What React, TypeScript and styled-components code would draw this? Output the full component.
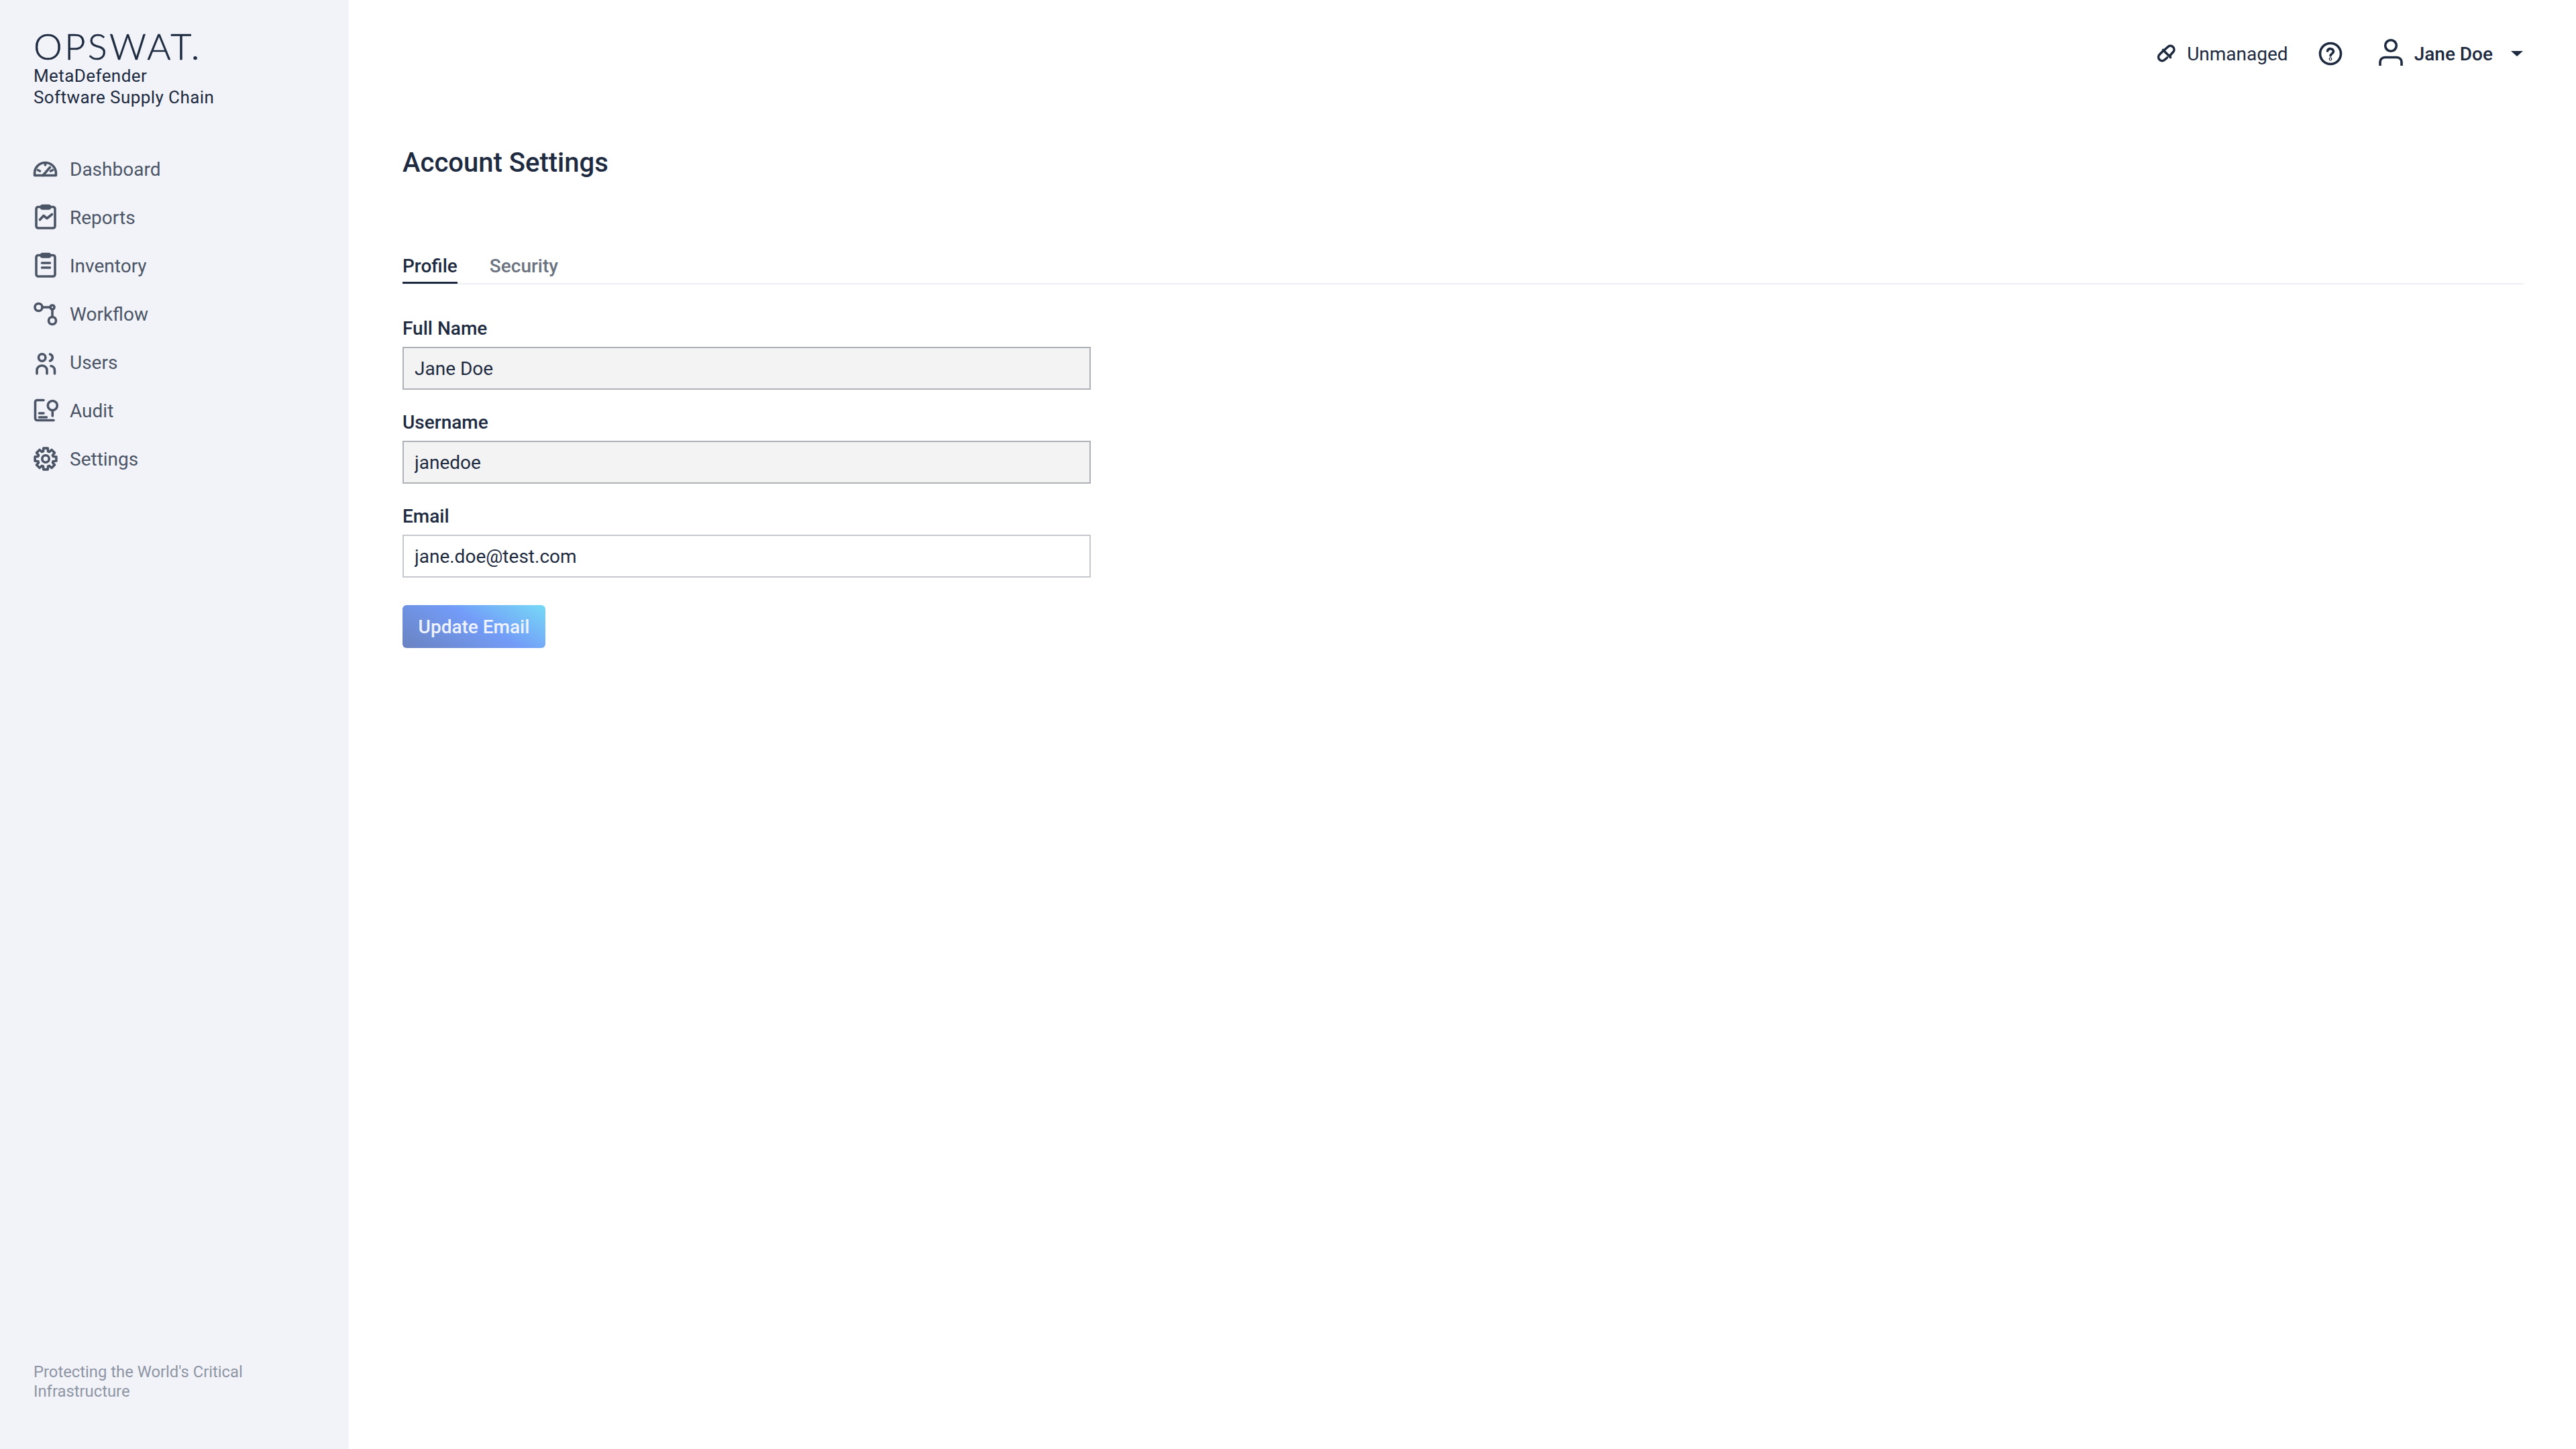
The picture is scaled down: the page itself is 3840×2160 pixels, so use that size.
import React from "react";
import styled, { createGlobalStyle } from "styled-components";

const GlobalStyle = createGlobalStyle`
  html, body {
    margin: 0;
    padding: 0;
    background: #fff;
  }
  body {
    font-family: Roboto, "Liberation Sans", sans-serif;
    color: #1d2a3f;
  }
`;

const Page = styled.div`
  display: flex;
  width: 3840px;
  height: 2160px;
  overflow: hidden;
`;

const Sidebar = styled.aside`
  display: flex;
  flex-direction: column;
  flex: 0 0 520px;
  box-sizing: border-box;
  padding: 38px 0 0 50px;
  background: #f1f3f9;
`;

const Logo = styled.div`
  font-family: Lato, sans-serif;
  font-weight: 300;
  font-size: 54px;
  line-height: 62px;
  letter-spacing: 3.4px;
  -webkit-text-stroke: 0.6px #1d2a3f;
  color: #1d2a3f;
`;

const Product = styled.div`
  margin-top: -3px;
  font-size: 26px;
  line-height: 32px;
  letter-spacing: 0.42px;
  color: #1d2a3f;
`;

const Nav = styled.nav`
  display: flex;
  flex-direction: column;
  margin: 55px 0 0 -2px;
`;

const NavItem = styled.div`
  display: flex;
  align-items: center;
  gap: 16px;
  height: 72px;
  font-size: 28px;
  color: #4b5565;
`;

const NavIcon = styled.svg`
  flex: none;
  width: 40px;
  height: 40px;
  fill: none;
  stroke: #4b5565;
  stroke-width: 3.6;
  stroke-linecap: round;
  stroke-linejoin: round;
`;

const Tagline = styled.div`
  margin-top: auto;
  margin-bottom: 71px;
  width: 340px;
  font-size: 23.8px;
  line-height: 29px;
  color: #8e95a3;
`;

const Main = styled.main`
  flex: 1;
  box-sizing: border-box;
  padding: 0 78px 0 80px;
`;

const TopBar = styled.header`
  display: flex;
  justify-content: flex-end;
  align-items: center;
  height: 160px;
  font-size: 28px;
`;

const Status = styled.div`
  display: flex;
  align-items: center;
  gap: 15px;
  margin-right: 45px;
`;

const HelpButton = styled.div`
  display: flex;
  margin-right: 54px;
`;

const UserMenu = styled.div`
  display: flex;
  align-items: center;
  gap: 17px;
  font-weight: 500;
`;

const BarIcon = styled.svg`
  flex: none;
  overflow: visible;
  fill: none;
  stroke: #1d2a3f;
  stroke-width: 3.6;
  stroke-linecap: round;
  stroke-linejoin: round;
`;

const Caret = styled.span`
  margin: 0 1px 0 10px;
  width: 0;
  height: 0;
  border-left: 9px solid transparent;
  border-right: 9px solid transparent;
  border-top: 8px solid #1d2a3f;
`;

const Title = styled.h1`
  margin: 60px 0 0;
  font-size: 40px;
  line-height: 46px;
  font-weight: 500;
`;

const Tabs = styled.div`
  display: flex;
  gap: 48px;
  margin-top: 111px;
  border-bottom: 2px solid #eeeff2;
`;

const Tab = styled.div<{ $active?: boolean }>`
  height: 46px;
  margin-bottom: -1px;
  box-sizing: border-box;
  padding-top: 3px;
  font-size: 28px;
  line-height: 34px;
  font-weight: 500;
  color: ${(p) => (p.$active ? "#1d2a3f" : "#6b7280")};
  border-bottom: ${(p) => (p.$active ? "3px solid #1d2a3f" : "none")};
`;

const Form = styled.form`
  display: flex;
  flex-direction: column;
  width: 1026px;
  padding-top: 49px;
`;

const Field = styled.div`
  display: flex;
  flex-direction: column;
  margin-bottom: 32px;
`;

const Label = styled.label`
  height: 44px;
  font-size: 28px;
  line-height: 34px;
  font-weight: 500;
`;

const TextInput = styled.input`
  height: 64px;
  box-sizing: border-box;
  padding: 0 16px;
  font-family: inherit;
  font-size: 28px;
  color: #1d2a3f;
  background: #fff;
  border: 2px solid #c6c8cf;
  border-radius: 0;
  outline: none;

  &:read-only {
    background: #f3f3f3;
    border-color: #aeb1b8;
  }
`;

const SubmitButton = styled.button`
  align-self: flex-start;
  width: 213px;
  height: 64px;
  margin-top: 9px;
  padding: 0;
  font-family: inherit;
  font-size: 28px;
  font-weight: 500;
  color: #eef3ff;
  background: linear-gradient(30deg, #6a82c0 0%, #739cf8 55%, #76daf6 100%);
  border: 0;
  border-radius: 6px;
`;

// eight rounded teeth round a ring
const gearPath = () => {
  const cx = 20;
  const cy = 20;
  const pts: string[] = [];
  for (let i = 0; i < 8; i++) {
    const a = (i * Math.PI) / 4 - Math.PI / 2;
    const at = (r: number, d: number) =>
      `${(cx + r * Math.cos(a + d)).toFixed(2)} ${(cy + r * Math.sin(a + d)).toFixed(2)}`;
    pts.push(
      `${i === 0 ? "M" : "L"}${at(11.8, -0.3)}`,
      `L${at(16.2, -0.2)}`,
      `L${at(16.2, 0.2)}`,
      `L${at(11.8, 0.3)}`
    );
  }
  return pts.join(" ") + " Z";
};

const navItems: { label: string; icon: React.ReactNode }[] = [
  {
    label: "Dashboard",
    icon: (
      <>
        <path d="M3.6 29.5V26a15.9 15.5 0 0 1 31.8 0v3.5Z" />
        <path d="M19.5 10.5v3.5M8.5 21.5l3 1.5M30.5 21.5l-3 1.5M16 29.5 26.5 17.5" />
      </>
    ),
  },
  {
    label: "Reports",
    icon: (
      <>
        <path d="M12 4.5H9a3 3 0 0 0-3 3V33a3 3 0 0 0 3 3h22a3 3 0 0 0 3-3V7.5a3 3 0 0 0-3-3h-3" />
        <rect x="13.5" y="2.5" width="13" height="4.5" rx="2" fill="#4b5565" />
        <path d="M11.5 23.5 17 17.5l5 4 7.5-6" />
      </>
    ),
  },
  {
    label: "Inventory",
    icon: (
      <>
        <path d="M12 4.5H9a3 3 0 0 0-3 3V33a3 3 0 0 0 3 3h22a3 3 0 0 0 3-3V7.5a3 3 0 0 0-3-3h-3" />
        <rect x="13.5" y="2.5" width="13" height="4.5" rx="2" fill="#4b5565" />
        <path d="M14.5 16h12M14.5 23h12" />
      </>
    ),
  },
  {
    label: "Workflow",
    icon: (
      <>
        <circle cx="9.5" cy="10" r="5.5" />
        <circle cx="30" cy="10" r="3" />
        <circle cx="30" cy="30" r="5.5" />
        <path d="M15 10h12M30 13v11.5" />
      </>
    ),
  },
  {
    label: "Users",
    icon: (
      <>
        <circle cx="14.7" cy="13" r="5.2" />
        <path d="M26.5 8a5.2 5.2 0 0 1 0 10" />
        <path d="M7 37v-5a7 7 0 0 1 7-7h1a7 7 0 0 1 7 7v5" />
        <path d="M28 25.5a6.5 6.5 0 0 1 5.5 6.5v5" />
      </>
    ),
  },
  {
    label: "Audit",
    icon: (
      <>
        <path d="M17 4.5H7.5a3 3 0 0 0-3 3v24a3 3 0 0 0 3 3H32" />
        <circle cx="30.3" cy="12.5" r="7" />
        <path d="M30.3 20v8M10.5 24H17M10.5 30h11" />
      </>
    ),
  },
  {
    label: "Settings",
    icon: (
      <>
        <path d={gearPath()} />
        <circle cx="20" cy="20" r="5.2" />
      </>
    ),
  },
];

const fields = [
  { label: "Full Name", value: "Jane Doe", readOnly: true },
  { label: "Username", value: "janedoe", readOnly: true },
  { label: "Email", value: "jane.doe@test.com", readOnly: false },
];

export default function App() {
  return (
    <Page>
      <GlobalStyle />
      <Sidebar>
        <Logo>OPSWAT.</Logo>
        <Product>
          MetaDefender
          <br />
          Software Supply Chain
        </Product>
        <Nav>
          {navItems.map((item) => (
            <NavItem key={item.label}>
              <NavIcon viewBox="0 0 40 40">{item.icon}</NavIcon>
              {item.label}
            </NavItem>
          ))}
        </Nav>
        <Tagline>Protecting the World's Critical Infrastructure</Tagline>
      </Sidebar>
      <Main>
        <TopBar>
          <Status>
            <BarIcon width="30" height="30" viewBox="0 0 30 30">
              <path d="M12 9l4.5-4a5.5 5.5 0 0 1 7.8 7.8L20 17.5" />
              <path d="M8.5 12l-4.3 4.2a5.5 5.5 0 0 0 7.8 7.8l3.5-3" />
              <path d="M9.5 9.5l11 11" />
            </BarIcon>
            Unmanaged
          </Status>
          <HelpButton>
            <BarIcon width="36" height="36" viewBox="0 0 36 36">
              <circle cx="18" cy="18" r="15.5" />
              <path d="M13.5 14a4.6 4.6 0 0 1 9 .8c0 3-4.5 3.5-4.5 6.2" />
              <circle cx="18" cy="26" r="0.6" />
            </BarIcon>
          </HelpButton>
          <UserMenu>
            <BarIcon width="36" height="40" viewBox="0 0 36 40">
              <circle cx="18" cy="8" r="8.3" />
              <path strokeLinecap="butt" d="M2 38v-5.5a7 7 0 0 1 7-7h18a7 7 0 0 1 7 7V38" />
            </BarIcon>
            Jane Doe
            <Caret />
          </UserMenu>
        </TopBar>
        <Title>Account Settings</Title>
        <Tabs>
          <Tab $active>Profile</Tab>
          <Tab>Security</Tab>
        </Tabs>
        <Form>
          {fields.map((f) => (
            <Field key={f.label}>
              <Label>{f.label}</Label>
              <TextInput defaultValue={f.value} readOnly={f.readOnly} />
            </Field>
          ))}
          <SubmitButton type="button">Update Email</SubmitButton>
        </Form>
      </Main>
    </Page>
  );
}
